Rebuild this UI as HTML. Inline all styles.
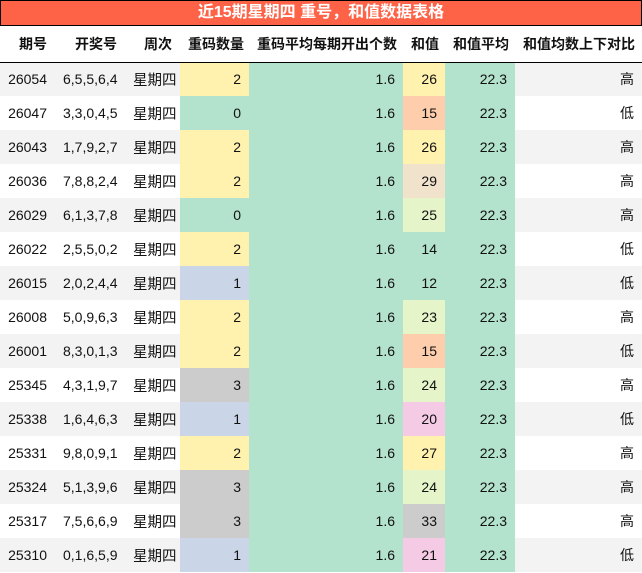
<!DOCTYPE html>
<html><head><meta charset="utf-8"><style>
*{margin:0;padding:0;box-sizing:border-box}
body{width:642px;height:573px;background:#fff;font-family:"Liberation Sans","Noto Sans CJK SC",sans-serif;overflow:hidden}
.title{position:absolute;left:0;top:0;width:642px;height:26px;background:#ff6347;border:1px solid #000;color:#fff;font-weight:bold;font-size:16px;text-align:center;line-height:24px}
table{position:absolute;left:0;top:26px;border-collapse:collapse;table-layout:fixed;width:642px}
th,td{text-align:right;padding:0 8px;white-space:nowrap;font-size:14px;color:#111}
th{height:36px;font-weight:bold;border-bottom:1px solid #000}
td{height:34px}
td:nth-child(2){padding-right:10px}
td:nth-child(3){padding-right:8px;font-size:14.5px}
tr.o td{background:#f3f3f3}
tr td.Y{background:#fff2ae}tr td.G{background:#b3e2cd}tr td.O{background:#fdcdac}
tr td.B{background:#cbd5e8}tr td.R{background:#cccccc}tr td.P{background:#f4cae4}
tr td.L{background:#e6f5c9}tr td.E{background:#f1e2cc}
</style></head><body>
<div class="title">近15期星期四 重号，和值数据表格</div>
<table>
<colgroup><col style="width:55px"><col style="width:70px"><col style="width:55px"><col style="width:69px"><col style="width:154px"><col style="width:42px"><col style="width:70px"><col style="width:127px"></colgroup>
<tr><th>期号</th><th>开奖号</th><th>周次</th><th>重码数量</th><th>重码平均每期开出个数</th><th>和值</th><th>和值平均</th><th>和值均数上下对比</th></tr>
<tr class="o"><td>26054</td><td>6,5,5,6,4</td><td>星期四</td><td class="Y">2</td><td class="G">1.6</td><td class="Y">26</td><td class="G">22.3</td><td>高</td></tr>
<tr><td>26047</td><td>3,3,0,4,5</td><td>星期四</td><td class="G">0</td><td class="G">1.6</td><td class="O">15</td><td class="G">22.3</td><td>低</td></tr>
<tr class="o"><td>26043</td><td>1,7,9,2,7</td><td>星期四</td><td class="Y">2</td><td class="G">1.6</td><td class="Y">26</td><td class="G">22.3</td><td>高</td></tr>
<tr><td>26036</td><td>7,8,8,2,4</td><td>星期四</td><td class="Y">2</td><td class="G">1.6</td><td class="E">29</td><td class="G">22.3</td><td>高</td></tr>
<tr class="o"><td>26029</td><td>6,1,3,7,8</td><td>星期四</td><td class="G">0</td><td class="G">1.6</td><td class="L">25</td><td class="G">22.3</td><td>高</td></tr>
<tr><td>26022</td><td>2,5,5,0,2</td><td>星期四</td><td class="Y">2</td><td class="G">1.6</td><td class="G">14</td><td class="G">22.3</td><td>低</td></tr>
<tr class="o"><td>26015</td><td>2,0,2,4,4</td><td>星期四</td><td class="B">1</td><td class="G">1.6</td><td class="G">12</td><td class="G">22.3</td><td>低</td></tr>
<tr><td>26008</td><td>5,0,9,6,3</td><td>星期四</td><td class="Y">2</td><td class="G">1.6</td><td class="L">23</td><td class="G">22.3</td><td>高</td></tr>
<tr class="o"><td>26001</td><td>8,3,0,1,3</td><td>星期四</td><td class="Y">2</td><td class="G">1.6</td><td class="O">15</td><td class="G">22.3</td><td>低</td></tr>
<tr><td>25345</td><td>4,3,1,9,7</td><td>星期四</td><td class="R">3</td><td class="G">1.6</td><td class="L">24</td><td class="G">22.3</td><td>高</td></tr>
<tr class="o"><td>25338</td><td>1,6,4,6,3</td><td>星期四</td><td class="B">1</td><td class="G">1.6</td><td class="P">20</td><td class="G">22.3</td><td>低</td></tr>
<tr><td>25331</td><td>9,8,0,9,1</td><td>星期四</td><td class="Y">2</td><td class="G">1.6</td><td class="Y">27</td><td class="G">22.3</td><td>高</td></tr>
<tr class="o"><td>25324</td><td>5,1,3,9,6</td><td>星期四</td><td class="R">3</td><td class="G">1.6</td><td class="L">24</td><td class="G">22.3</td><td>高</td></tr>
<tr><td>25317</td><td>7,5,6,6,9</td><td>星期四</td><td class="R">3</td><td class="G">1.6</td><td class="R">33</td><td class="G">22.3</td><td>高</td></tr>
<tr class="o"><td>25310</td><td>0,1,6,5,9</td><td>星期四</td><td class="B">1</td><td class="G">1.6</td><td class="P">21</td><td class="G">22.3</td><td>低</td></tr>
</table>
</body></html>
